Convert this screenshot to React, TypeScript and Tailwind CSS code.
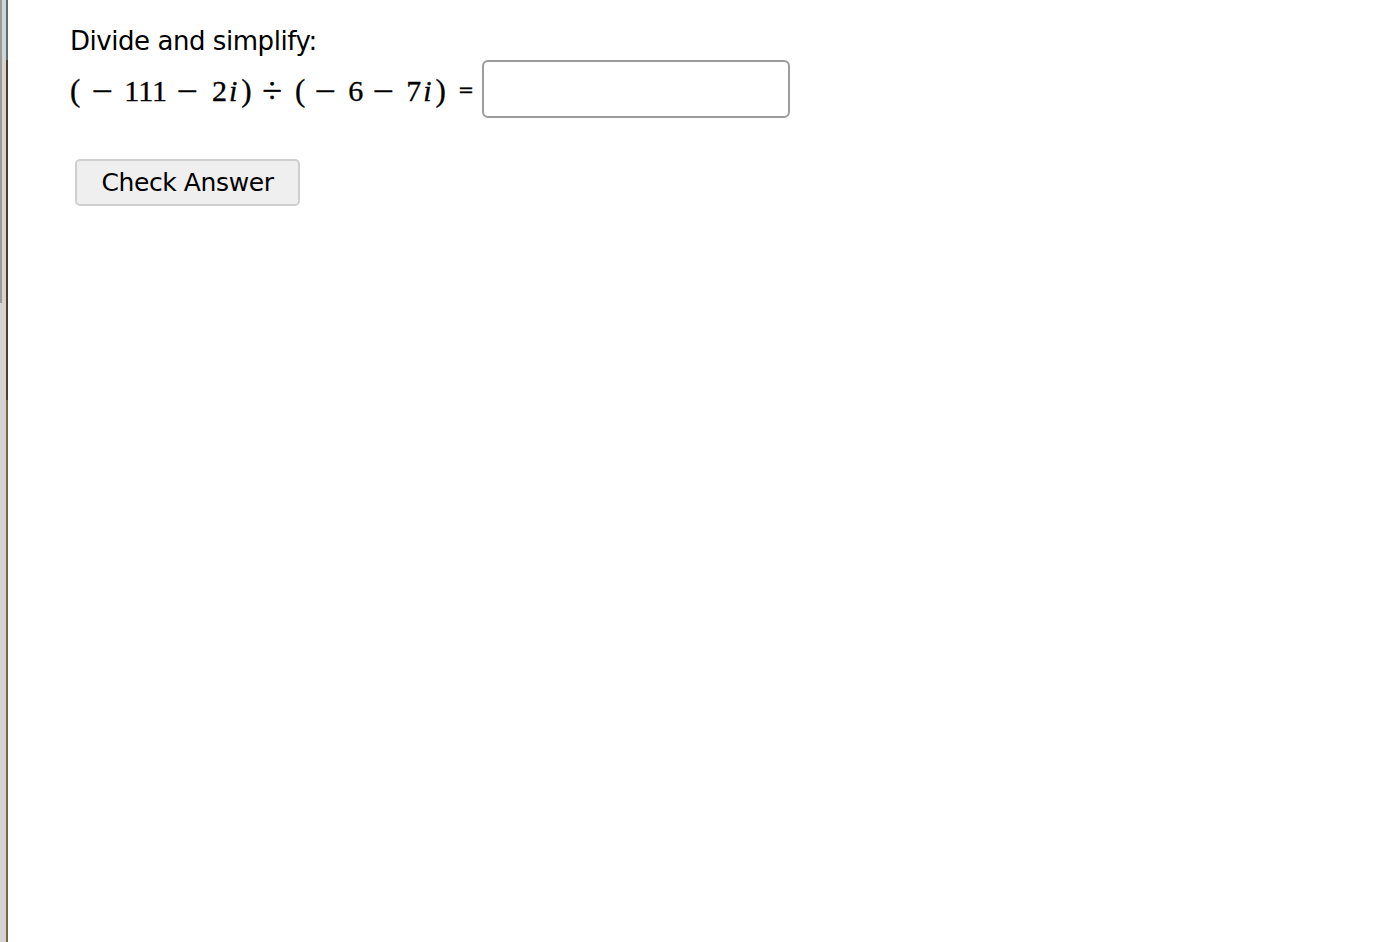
const op = "text-[30px] leading-none font-['Liberation_Serif',serif] [-webkit-text-stroke:0.35px_black]"
const minus = "inline-block scale-x-[1.25]"

export default function App() {
  return (
    <div className="flex min-h-[942px] w-full bg-white">
      <div className="flex w-[8px] shrink-0">
        <div className="flex w-[6px] flex-col bg-[#d4d4d4]">
          <div className="h-[303px] w-[2px] bg-[#9a9a9a]" />
        </div>
        <div className="flex w-[2px] flex-col">
          <div className="h-[60px] bg-[#5b6a80]" />
          <div className="h-[340px] bg-[#4f3c2c]" />
          <div className="flex-1 bg-[#7a6446]" />
        </div>
      </div>
      <div className="flex flex-col pl-[62px] pt-[22px] text-black">
        <p className="text-[26px] leading-[38px] font-['DejaVu_Sans',sans-serif] tracking-[-0.45px]">
          Divide and simplify:
        </p>
        <div className="flex items-center">
          <div className={`flex items-baseline pt-[2px] ${op}`}>
            <span className="text-[31px]">(</span>
            <span className={`ml-[14px] ${minus}`}>−</span>
            <span className="ml-[13px]">111</span>
            <span className={`ml-[12px] ${minus}`}>−</span>
            <span className="ml-[16px]">2</span>
            <span className="ml-[2px] italic">i</span>
            <span className="ml-[4px] text-[31px]">)</span>
            <span className="ml-[12px] inline-block scale-[1.2]">÷</span>
            <span className="ml-[15px] text-[31px]">(</span>
            <span className={`ml-[12px] ${minus}`}>−</span>
            <span className="ml-[14px]">6</span>
            <span className={`ml-[12px] ${minus}`}>−</span>
            <span className="ml-[14px]">7</span>
            <span className="ml-[2px] italic">i</span>
            <span className="ml-[4px] text-[31px]">)</span>
          </div>
          <span className="ml-[12px] mr-[8px] text-[19px] font-['DejaVu_Sans',sans-serif] [-webkit-text-stroke:0.3px_black]">=</span>
          <input
            type="text"
            className="h-[58px] w-[308px] rounded-[6px] border-2 border-[#9c9c9c] bg-white px-2 text-[24px] outline-none"
          />
        </div>
        <div className="mt-[41px] pl-[5px]">
          <button className="h-[47px] w-[225px] rounded-[5px] border-2 border-[#cfcfcf] bg-[#efefef] text-[25px] font-['DejaVu_Sans',sans-serif] tracking-[-0.4px] text-black">
            Check Answer
          </button>
        </div>
      </div>
    </div>
  )
}
